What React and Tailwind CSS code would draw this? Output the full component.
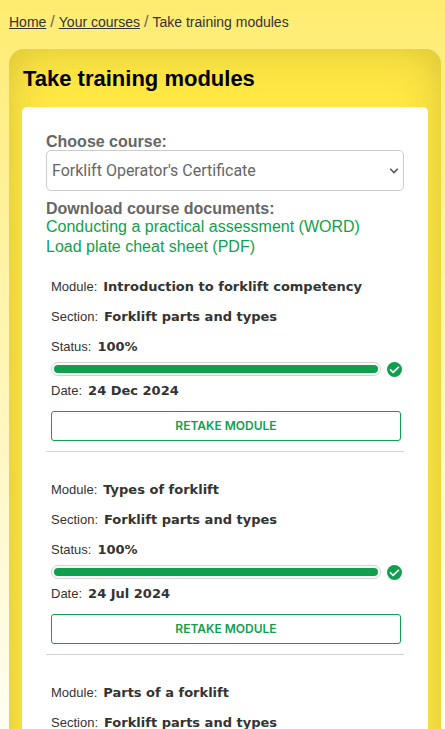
import { useState } from 'react';

const documents = [
  'Conducting a practical assessment (WORD)',
  'Load plate cheat sheet (PDF)',
];

const modules = [
  { name: 'Introduction to forklift competency', section: 'Forklift parts and types', status: 100, date: '24 Dec 2024' },
  { name: 'Types of forklift', section: 'Forklift parts and types', status: 100, date: '24 Jul 2024' },
  { name: 'Parts of a forklift', section: 'Forklift parts and types' },
];

const Breadcrumb = () => (
  <nav aria-label="Breadcrumb" className="px-[9px] pt-3 text-sm leading-5 text-[#333]">
    <a href="#home" className="underline">Home</a>
    <span className="px-1 text-base leading-5 text-[#666]">/</span>
    <a href="#courses" className="underline">Your courses</a>
    <span className="px-1 text-base leading-5 text-[#666]">/</span>
    <span>Take training modules</span>
  </nav>
);

const Field = ({ label, value }) => (
  <p className="flex h-[30px] items-baseline gap-[6px] pt-[7px] text-[13px] leading-4">
    <span>{label}:</span>
    <strong className="font-['DejaVu_Sans',sans-serif] font-bold">{value}</strong>
  </p>
);

const CheckIcon = () => (
  <svg viewBox="0 0 15 15" className="size-[15px] shrink-0" aria-hidden="true">
    <circle cx="7.5" cy="7.5" r="7.5" fill="#0f9f4d" />
    <path d="M3 7.3 6.1 10.3 11.9 4.8" fill="none" stroke="#fff" strokeWidth="1.6" />
  </svg>
);

const ProgressBar = ({ value }) => (
  <div className="-mr-px flex h-[14px] items-center gap-[6px]">
    <div
      role="progressbar"
      aria-label="Module progress"
      aria-valuenow={value}
      className="h-[14px] flex-1 rounded-full border border-[#d2d2d2] bg-[#fafafa] p-[2px]"
    >
      <div className="h-full rounded-full bg-[#0f9f4d]" style={{ width: `${value}%` }} />
    </div>
    <CheckIcon />
  </div>
);

const ModuleCard = ({ module }) => (
  <li className="border-b border-[#d2d2d2] pb-[10px] pl-[5px] pr-[3px] text-[#333]">
    <Field label="Module" value={module.name} />
    <Field label="Section" value={module.section} />
    {module.date && (
      <>
        <Field label="Status" value={`${module.status}%`} />
        <ProgressBar value={module.status} />
        <Field label="Date" value={module.date} />
        <button
          type="button"
          className="mt-[5px] h-[30px] w-full rounded-[3px] border border-[#0f9f4d] font-['Inter',sans-serif] text-xs font-semibold text-[#0f9f4d]"
        >
          RETAKE MODULE
        </button>
      </>
    )}
  </li>
);

const App = () => {
  const [course, setCourse] = useState('forklift');

  return (
    <div className="min-h-screen bg-linear-to-b from-[#feec70] to-[#fffef8] font-['Liberation_Sans',Arial,sans-serif]">
      <Breadcrumb />
      <main className="ml-[9px] mr-1 mt-[17px] rounded-[15px] bg-[#ffe843] px-[13px] pb-4 pt-[15px] shadow-[inset_0_0_45px_rgba(0,0,0,0.16)]">
        <h1 className="px-px text-[22px] font-bold leading-[30px] text-black">Take training modules</h1>
        <section className="mt-[13px] rounded-[5px] bg-white px-6 pb-6 pt-[27px]">
          <label htmlFor="course" className="block text-base font-bold leading-4 text-[#666]">
            Choose course:
          </label>
          <div className="relative">
            <select
              id="course"
              value={course}
              onChange={(e) => setCourse(e.target.value)}
              className="h-[41px] w-full appearance-none rounded-[5px] border border-[#ccc] bg-white pl-[5px] pr-6 font-['Roboto',sans-serif] text-base text-[#666]"
            >
              <option value="forklift">Forklift Operator's Certificate</option>
            </select>
            <svg viewBox="0 0 10 6" className="pointer-events-none absolute right-[5px] top-[18px] h-[6px] w-[10px]" aria-hidden="true">
              <path d="M1.2 .8 5 4.6 8.8 .8" fill="none" stroke="#555" strokeWidth="1.5" />
            </svg>
          </div>

          <h2 className="mt-[10px] text-base font-bold leading-4 text-[#666]">Download course documents:</h2>
          <ul className="text-base leading-5 text-[#0f9f4d]">
            {documents.map((name) => (
              <li key={name}>
                <a href="#document">{name}</a>
              </li>
            ))}
          </ul>

          <ul className="mt-[15px] flex flex-col gap-[23px]">
            {modules.map((module) => (
              <ModuleCard key={module.name} module={module} />
            ))}
          </ul>
        </section>
      </main>
    </div>
  );
};

export default App;
